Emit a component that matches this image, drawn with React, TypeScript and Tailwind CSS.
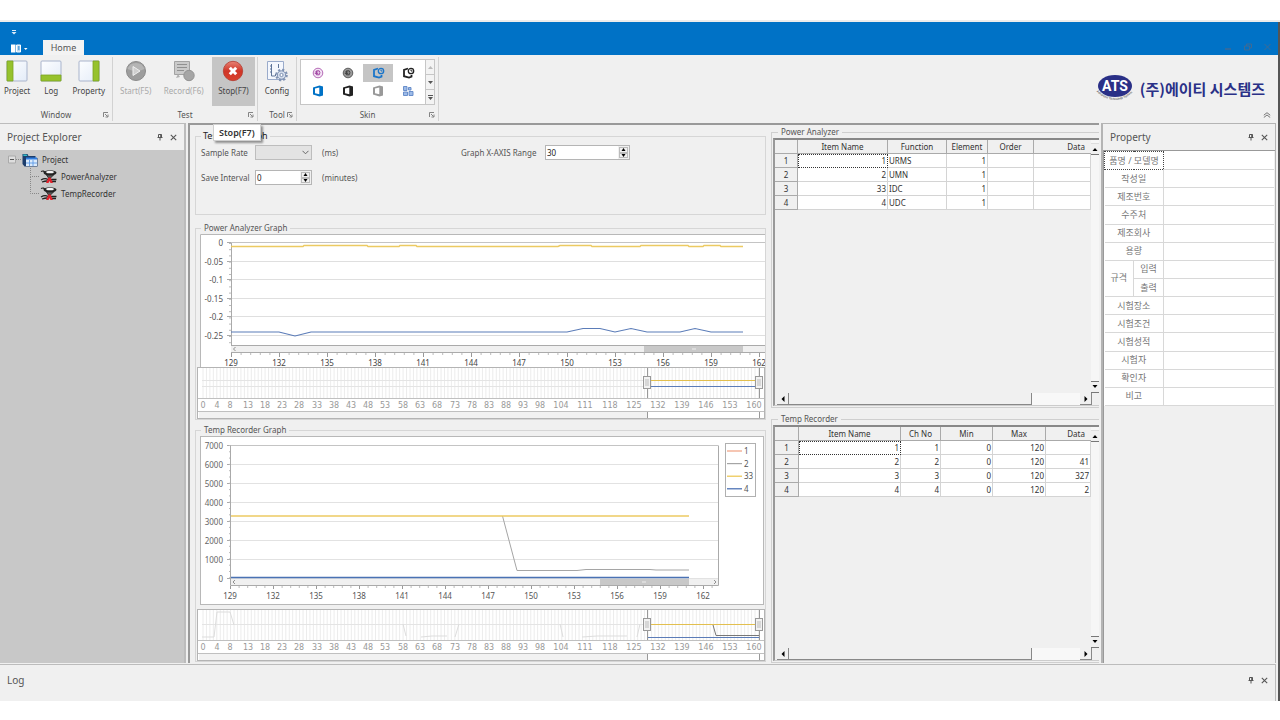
import { useState } from "react";
import type { ReactNode } from "react";

const range = (n: number) => Array.from({ length: n }, (_, i) => i);

const fontStack = "font-['Noto_Sans','Noto_Sans_CJK_KR',sans-serif]";

/* ---------- small icons ---------- */

function PinIcon() {
  return (
    <svg width="6" height="8" viewBox="0 0 6 8" fill="none" stroke="#555">
      <path d="M1.5 4.5v-3h3v3M0.5 4.5h5M3 5v2.5" />
      <path d="M3.8 1.5v3" strokeWidth="1.2" />
    </svg>
  );
}

function CloseIcon() {
  return (
    <svg width="7" height="7" viewBox="0 0 7 7" stroke="#555" strokeWidth="1.1">
      <path d="M0.8 0.8l5.4 5.4M6.2 0.8L0.8 6.2" />
    </svg>
  );
}

function LauncherIcon() {
  return (
    <svg width="6" height="6" viewBox="0 0 6 6" fill="none" stroke="#777" strokeWidth="0.9">
      <path d="M0.5 5V0.5H5M2 2l2.5 2.5M5 2.5V5H2.5" />
    </svg>
  );
}

function PaneIcon({ side }: { side: "left" | "bottom" | "right" }) {
  return (
    <svg width="22" height="22" viewBox="0 0 22 22">
      <defs>
        <linearGradient id="pane" x1="0" y1="0" x2="1" y2="1">
          <stop offset="0" stopColor="#fdfeff" />
          <stop offset="1" stopColor="#e4ecf8" />
        </linearGradient>
      </defs>
      <rect x="1" y="1" width="20" height="20" rx="1" fill="url(#pane)" stroke="#a9b4cc" />
      {side === "left" && <path d="M1 1h6v20H1z" fill="#96c22e" stroke="#7ba324" strokeWidth="0.8" />}
      {side === "bottom" && <path d="M1 15h20v6H1z" fill="#96c22e" stroke="#7ba324" strokeWidth="0.8" />}
      {side === "right" && <path d="M15 1h6v20h-6z" fill="#96c22e" stroke="#7ba324" strokeWidth="0.8" />}
    </svg>
  );
}

function StartIcon() {
  return (
    <svg width="22" height="22" viewBox="0 0 22 22">
      <circle cx="11" cy="11" r="9.5" fill="#9d9d9d" stroke="#8b8b8b" />
      <path d="M2.5 9a9 9 0 0 1 17 0q-8 4-17 0z" fill="#b5b5b5" />
      <path d="M8 6.5l7 4.5-7 4.5z" fill="#cfcfcf" stroke="#efefef" />
    </svg>
  );
}

function RecordIcon() {
  return (
    <svg width="22" height="22" viewBox="0 0 22 22">
      <path d="M1.5 1.5h15v13h-15z" fill="#cacaca" stroke="#a2a2a2" />
      <path d="M4 4.5h10M4 7.5h10M4 10.5h7" stroke="#909090" />
      <path d="M5 14l-2 4 4-1" fill="#b0b0b0" />
      <circle cx="16" cy="15.5" r="5.2" fill="#a6a6a6" stroke="#949494" />
    </svg>
  );
}

function StopIcon() {
  return (
    <svg width="22" height="22" viewBox="0 0 22 22">
      <defs>
        <linearGradient id="stop" x1="0" y1="0" x2="0" y2="1">
          <stop offset="0" stopColor="#e88476" />
          <stop offset="0.5" stopColor="#cf3527" />
          <stop offset="1" stopColor="#d9402c" />
        </linearGradient>
      </defs>
      <circle cx="11" cy="11" r="9.7" fill="url(#stop)" stroke="#b23a2e" strokeWidth="0.8" />
      <path d="M7.8 7.8l6.4 6.4M14.2 7.8l-6.4 6.4" stroke="#fff" strokeWidth="3" />
    </svg>
  );
}

function ConfigIcon() {
  return (
    <svg width="22" height="22" viewBox="0 0 22 22" fill="none">
      <path d="M1.5 1.5h16v18h-16z" fill="#f4f7fd" stroke="#9aabcb" />
      <path d="M5.5 4v12H9M12.5 4v4M4 6h1M4 9h1M4 12h1M9.5 14v2" stroke="#5f7599" />
      <circle cx="15.5" cy="15" r="5.3" stroke="#8193b3" strokeWidth="2" strokeDasharray="2.2 1.96" />
      <circle cx="15.5" cy="15" r="4.2" fill="#d5deed" stroke="#7c8fb0" />
      <circle cx="15.5" cy="15" r="1.6" fill="#fff" stroke="#7c8fb0" />
    </svg>
  );
}

function RoundSkin({ color, fill }: { color: string; fill: string }) {
  return (
    <svg width="12" height="12" viewBox="0 0 12 12" fill="none">
      <circle cx="6" cy="6" r="4.8" fill={fill} stroke={color} strokeWidth="0.8" />
      <path d="M4.5 3.8h2.7q1.5 1.8 0 4H4.5zM2.8 5h3.500M2.800 6.600h3.500" stroke={color} />
    </svg>
  );
}

function OfficeSkin({ color }: { color: string }) {
  return (
    <svg width="12" height="12" viewBox="0 0 12 12">
      <path fillRule="evenodd" d="M1 2.6L7.5 0.5l3.5 1v9l-3.5 1L1 9.4zM3 3.5v4.8l4.3 0.9V2.4z" fill={color} />
    </svg>
  );
}

function OfficeClockSkin({ color }: { color: string }) {
  return (
    <svg width="13" height="12" viewBox="0 0 13 12" fill="none">
      <path d="M6 1.5L2 2.8v6.400L7 10.500l2.500-0.800V8" stroke={color} strokeWidth="1.8" />
      <circle cx="9" cy="4" r="2.7" stroke={color} strokeWidth="1.3" />
      <path d="M9 2.5V4h1.5" stroke={color} />
    </svg>
  );
}

function GridSkin() {
  return (
    <svg width="12" height="12" viewBox="0 0 12 12" fill="#9dbbe8" stroke="#5f86c6" strokeWidth="0.9">
      <path d="M1.5 1.5h3.500v4h-3.500zM1.500 7h4v3.500h-4zM6.500 2.500H9V5H6.500zM7 6.500h4v4H7z" />
    </svg>
  );
}

function InstrumentIcon() {
  return (
    <svg width="18" height="15" viewBox="0 0 18 15">
      <ellipse cx="10" cy="3.8" rx="6.5" ry="2.6" fill="#222" />
      <path d="M5.500 3q4.500-2.500 9 0l-2 1.300H7.500z" fill="#f4f4f4" />
      <path d="M1 2.500q3-1.500 4 1.500" fill="none" stroke="#222" strokeWidth="1.200" />
      <path d="M6.500 6h7l-3 3H8.500z" fill="#555" stroke="#222" strokeWidth="0.8" />
      <path d="M1 11q4-2.500 7-0.500h8.500M2 13q3-1 5-1M12 12.500h4" fill="none" stroke="#222" strokeWidth="1.3" />
      <path d="M8.500 8.500L6 14h2.500l1-2 1 2H13L10.500 8.500z" fill="#e0202a" />
    </svg>
  );
}

function ProjectIcon() {
  return (
    <svg width="16" height="14" viewBox="0 0 16 14">
      <path d="M0.5 1h5l1 2h7v2h2v8.500h-13L0.500 11z" fill="#1c3d6c" />
      <path d="M1 1.500h3.500l1 1.500H1.500z" fill="#35c0c8" />
      <path d="M4 5h11v8H4z" fill="#dcebfb" />
      <path d="M4 4.500h11v2H4z" fill="#2f7de0" />
      <path d="M7.500 7v6M11 7v6M4 10h11" stroke="#5b9ae6" strokeWidth="0.9" />
    </svg>
  );
}

function AtsLogo() {
  return (
    <svg width="42" height="32" viewBox="0 0 42 32">
      <ellipse cx="21" cy="13" rx="17" ry="11" fill="#2a3087" />
      <text x="21" y="18" textAnchor="middle" className="font-['Roboto',sans-serif] text-[14px] font-bold" fill="#fff">
        ATS
      </text>
      <path id="atsCurve" d="M3 19Q21 35 39 19" fill="none" />
      <text className="font-['Liberation_Sans',sans-serif] text-[3px]" textAnchor="middle" fill="#333">
        <textPath href="#atsCurve" startOffset="50%">Advanced Technology Systems</textPath>
      </text>
    </svg>
  );
}

/* ---------- ribbon ---------- */

interface RibbonButtonProps {
  label: string;
  icon: ReactNode;
  disabled?: boolean;
  active?: boolean;
  tooltip?: string;
}

function RibbonButton({ label, icon, disabled, active, tooltip }: RibbonButtonProps) {
  return (
    <div className="relative">
      <button
        disabled={disabled}
        className={`flex h-[49px] flex-col items-center gap-[3px] px-1 pt-[3px] ${
          active ? "min-w-[43px] bg-[#c5c5c5]" : ""
        } ${disabled ? "text-[#a9a9a9]" : "text-[#444]"}`}
      >
        {icon}
        <span className="text-[8px] leading-[12px]">{label}</span>
      </button>
      {tooltip && (
        <div
          role="tooltip"
          className="absolute left-px top-[67px] z-10 whitespace-nowrap border border-[#d0d0d0] bg-white px-[5px] text-[9px] font-semibold leading-[15px] text-[#333] shadow-[2px_2px_2px_rgba(0,0,0,0.4)]"
        >
          {tooltip}
        </div>
      )}
    </div>
  );
}

function RibbonGroup({ title, className, children }: { title: string; className: string; children: ReactNode }) {
  return (
    <section className={`flex flex-col justify-between border-r border-[#d2d2d2] ${className}`}>
      <div className="flex justify-center">{children}</div>
      <div className="relative text-center text-[8px] leading-[13px] text-[#555]">
        {title}
        <button aria-label={`${title} options`} className="absolute bottom-[3px] right-[3px]">
          <LauncherIcon />
        </button>
      </div>
    </section>
  );
}

const skins = [
  { name: "DevExpress", icon: <RoundSkin color="#a349a4" fill="#f3e3f5" /> },
  { name: "DevExpress Dark", icon: <RoundSkin color="#444" fill="#999" /> },
  { name: "Office 2016", icon: <OfficeClockSkin color="#1b75c9" /> },
  { name: "Office 2016 Dark", icon: <OfficeClockSkin color="#222" /> },
  { name: "Office 2013", icon: <OfficeSkin color="#0072c6" /> },
  { name: "Office 2013 Dark", icon: <OfficeSkin color="#222" /> },
  { name: "Office 2013 Gray", icon: <OfficeSkin color="#999" /> },
  { name: "Visual Studio", icon: <GridSkin /> },
];

function SkinGallery() {
  const [selected, setSelected] = useState(2);
  return (
    <div className="mt-0.5 flex h-[46px] border border-[#c6c6c6] bg-white">
      <div className="grid grid-cols-4 content-center px-0.5">
        {skins.map((skin, i) => (
          <button
            key={skin.name}
            aria-label={skin.name}
            onClick={() => setSelected(i)}
            className={`flex h-[18px] w-[30px] items-center justify-center ${i === selected ? "bg-[#c5c5c5]" : ""}`}
          >
            {skin.icon}
          </button>
        ))}
      </div>
      <div className="flex w-[9px] flex-col divide-y divide-[#c6c6c6] border-l border-[#c6c6c6] bg-[#f3f3f3]">
        <button aria-label="Scroll up" className="flex flex-1 items-center justify-center">
          <svg width="5" height="3" viewBox="0 0 5 3"><path d="M0 3h5L2.5 0z" fill="#bbb" /></svg>
        </button>
        <button aria-label="Scroll down" className="flex flex-1 items-center justify-center">
          <svg width="5" height="3" viewBox="0 0 5 3"><path d="M0 0h5L2.5 3z" fill="#555" /></svg>
        </button>
        <button aria-label="More skins" className="flex flex-1 items-center justify-center">
          <svg width="5" height="5" viewBox="0 0 5 5"><path d="M0 0h5v1H0zM0 2h5L2.5 5z" fill="#555" /></svg>
        </button>
      </div>
    </div>
  );
}

function TitleBar() {
  return (
    <header className="flex h-[33px] items-end justify-between bg-[#0072c6]">
      <div className="flex items-end">
        <div className="flex w-[43px] flex-col gap-[9px] pb-0.5 pl-[11px]">
          <button aria-label="Customize toolbar" className="w-[6px]">
            <svg width="6" height="5" viewBox="0 0 6 5"><path d="M1 0h4v1H1zM0.5 2h5L3 4.5z" fill="#dbeaf7" /></svg>
          </button>
          <button aria-label="Menu" className="w-4">
            <svg width="17" height="9" viewBox="0 0 17 9">
              <path d="M0 0.5h4.5v8H0z" fill="#fff" />
              <path d="M5.5 1h4v7h-4z" fill="#bdd8ee" stroke="#fff" />
              <path d="M7 3h1.5M7 5h1.5" stroke="#0072c6" />
              <path d="M13 4h3.5l-1.75 2z" fill="#fff" />
            </svg>
          </button>
        </div>
        <button className="h-[15px] w-[41px] bg-[#f3f3f3] text-[9px] leading-[15px] text-[#555]">Home</button>
      </div>
      <div className="flex gap-[12px] pb-1 pr-[7px]">
        <button aria-label="Minimize">
          <svg width="8" height="8" viewBox="0 0 8 8"><path d="M1 6h6" stroke="#3f6a94" strokeWidth="1.5" /></svg>
        </button>
        <button aria-label="Restore">
          <svg width="8" height="8" viewBox="0 0 8 8" fill="none" stroke="#3f6a94"><path d="M0.5 3h5v4h-5zM2.5 3V1h5v4H5.5" /></svg>
        </button>
        <button aria-label="Close">
          <svg width="7" height="8" viewBox="0 0 7 8" stroke="#3f6a94"><path d="M0.5 1l6 6M6.5 1l-6 6" /></svg>
        </button>
      </div>
    </header>
  );
}

function Ribbon() {
  return (
    <div className="flex h-[68px] justify-between bg-[#f0f0f0] pb-px pt-0.5">
      <div className="flex pb-px">
        <RibbonGroup title="Window" className="w-[113px]">
          <div className="flex w-full justify-between pr-[3px]">
            <RibbonButton label="Project" icon={<PaneIcon side="left" />} />
            <RibbonButton label="Log" icon={<PaneIcon side="bottom" />} />
            <RibbonButton label="Property" icon={<PaneIcon side="right" />} />
          </div>
        </RibbonGroup>
        <RibbonGroup title="Test" className="w-[145px]">
          <div className="flex w-full justify-between pl-[3px] pr-0.5">
            <RibbonButton label="Start(F5)" icon={<StartIcon />} disabled />
            <RibbonButton label="Record(F6)" icon={<RecordIcon />} disabled />
            <RibbonButton label="Stop(F7)" icon={<StopIcon />} active tooltip="Stop(F7)" />
          </div>
        </RibbonGroup>
        <RibbonGroup title="Tool" className="w-[39px]">
          <RibbonButton label="Config" icon={<ConfigIcon />} />
        </RibbonGroup>
        <RibbonGroup title="Skin" className="w-[142px]">
          <SkinGallery />
        </RibbonGroup>
      </div>
      <div className="flex flex-col items-end justify-between pb-1 pr-[7px] pt-4">
        <div className="flex items-center gap-1 pr-[6px]">
          <AtsLogo />
          <span className="font-['Noto_Sans_CJK_KR',sans-serif] text-[15px] font-bold leading-[22px] text-[#2a3087]">
            (주)에이티 시스템즈
          </span>
        </div>
        <button aria-label="Collapse ribbon">
          <svg width="8" height="6" viewBox="0 0 8 6" fill="none" stroke="#777"><path d="M0.8 3.2L4 0.7l3.2 2.5M0.8 5.5L4 3l3.2 2.5" /></svg>
        </button>
      </div>
    </div>
  );
}

/* ---------- docked panels ---------- */

function PanelHeader({ title }: { title: string }) {
  return (
    <div className="flex h-[26px] items-center justify-between px-[7px]">
      <h2 className="text-[10px] leading-[14px] text-[#555]">{title}</h2>
      <div className="flex items-center gap-[7px]">
        <button aria-label={`Pin ${title}`}><PinIcon /></button>
        <button aria-label={`Close ${title}`}><CloseIcon /></button>
      </div>
    </div>
  );
}

function ProjectExplorer() {
  return (
    <aside className="flex w-[186px] shrink-0 flex-col border-r-2 border-t border-[#bcbcbc] bg-[#f0f0f0]">
      <PanelHeader title="Project Explorer" />
      <ul className="flex-1 bg-[#c8c8c8] pt-px text-[8px] leading-[17px] text-[#333]">
        <li>
          <div className="flex items-center pl-2">
            <svg width="14" height="9" viewBox="0 0 14 9" fill="none" stroke="#888">
              <path d="M0.5 1h7v7h-7z" fill="#dedede" stroke="#aaa" />
              <path d="M2 4.5h4" stroke="#555" />
              <path d="M8 4.5h6" strokeDasharray="1 1" />
            </svg>
            <ProjectIcon />
            <span className="pl-1">Project</span>
          </div>
          <ul className="ml-[30px]">
            {["PowerAnalyzer", "TempRecorder"].map((name) => (
              <li key={name} className="flex h-[17px] items-center">
                <svg width="10" height="17" viewBox="0 0 10 17" fill="none" stroke="#888" strokeDasharray="1 1">
                  <path d="M0.5 0v8.5H10" />
                  {name === "PowerAnalyzer" && <path d="M0.5 9v8" />}
                </svg>
                <InstrumentIcon />
                <span className="pl-[3px]">{name}</span>
              </li>
            ))}
          </ul>
        </li>
      </ul>
    </aside>
  );
}

const specRows = [
  "품명 / 모델명",
  "작성일",
  "제조번호",
  "수주처",
  "제조회사",
  "용량",
  "입력",
  "출력",
  "시험장소",
  "시험조건",
  "시험성적",
  "시험자",
  "확인자",
  "비고",
];

function PropertyPanel() {
  return (
    <aside className="flex w-[175px] shrink-0 flex-col border-l-2 border-r border-t border-[#b4b4b4] bg-[#f0f0f0]">
      <PanelHeader title="Property" />
      <div className="flex-1 border-l border-t border-[#999] pr-px">
        <table className="h-[255px] w-full table-fixed border-collapse bg-white text-center text-[9px] leading-[12px] text-[#777]">
          <colgroup>
            <col className="w-[29px]" />
            <col className="w-[30px]" />
            <col />
          </colgroup>
          <tbody>
            {specRows.map((name, i) => {
              const nested = name === "입력" || name === "출력";
              return (
                <tr key={name}>
                  {name === "입력" && (
                    <th rowSpan={2} className="border-b border-r border-[#d8d8d8] font-normal">
                      규격
                    </th>
                  )}
                  <th
                    colSpan={nested ? 1 : 2}
                    className={`whitespace-nowrap font-normal ${
                      i === 0 ? "border border-dotted border-[#444]" : "border-b border-r border-[#d8d8d8]"
                    }`}
                  >
                    {name}
                  </th>
                  <td className="border-b border-[#d8d8d8]" />
                </tr>
              );
            })}
          </tbody>
        </table>
      </div>
    </aside>
  );
}

/* ---------- charts ---------- */

const samples = [129, 132, 135, 138, 141, 144, 147, 150, 153, 156, 159, 162];
const svgText = "font-['Noto_Sans',sans-serif] text-[8px]";

function PowerChart() {
  const yLabels = ["0", "-0.05", "-0.1", "-0.15", "-0.2", "-0.25"];
  const y = (i: number) => Math.round(8 + i * 18.6) + 0.5;
  return (
    <svg viewBox="0 0 565 133" className="block h-auto w-full bg-white">
      <path d="M0.5 133V0.5H565" fill="none" stroke="#b8b8b8" />
      {yLabels.map((label, i) => (
        <g key={label}>
          <path d={`M31 ${y(i)}H565`} stroke={i === 0 ? "#c4c4c4" : "#dfdfdf"} />
          <path d={`M27 ${y(i)}h4`} stroke="#aaa" />
          <text x="23" y={y(i) + 3} textAnchor="end" fill="#555" className={svgText}>{label}</text>
        </g>
      ))}
      {range(17).map((i) => (
        <path key={i} d={`M29 ${9.5 + i * 6.2}h2`} stroke="#bbb" />
      ))}
      <path d="M31.5 9v109" stroke="#aaa" />
      <rect x="31" y="111" width="534" height="7" fill="#f0f0f0" />
      <path d="M31 111.5H565M31 118.5H565" stroke="#aaa" />
      <rect x="444" y="112" width="99" height="6" fill="#c8c8c8" />
      <path d="M492 115h4" stroke="#eee" />
      <path d="M35.5 113l-2 2 2 2" fill="none" stroke="#777" strokeWidth="0.8" />
      {range(56).map((i) => (
        <path key={i} d={`M${31.5 + i * 9.6} 119v2`} stroke="#bbb" />
      ))}
      {samples.map((m, i) => (
        <g key={m}>
          <path d={`M${31.5 + i * 48} 119v4`} stroke="#999" />
          <text x={31 + i * 48} y="132" textAnchor="middle" fill="#444" className={svgText}>{m}</text>
        </g>
      ))}
      <path
        d="M31 12.5H103l1-1H167l1 1H199l1-1H216l1 1H358l2-1H391l1 1H440l1-1H488l1 1H503l1-1H520l1 1H543"
        fill="none"
        stroke="#ecca62"
        strokeWidth="1.5"
      />
      <path
        d="M31 98H79L95 102L111 98H367L383 94.5H400L415 98L431 94.5L447 98H480L495 94.5L511 98H543"
        fill="none"
        stroke="#5b7cb8"
        strokeWidth="1.2"
      />
    </svg>
  );
}

const legend = [
  { name: "1", color: "#f0a080" },
  { name: "2", color: "#a5a5a5" },
  { name: "33", color: "#ecc54c" },
  { name: "4", color: "#4068b0" },
];

function TempChart() {
  const y = (i: number) => Math.round(10 + i * 18.93) - 0.5;
  return (
    <svg viewBox="0 0 564 169" className="block h-auto w-full bg-white">
      <rect x="0.5" y="0.5" width="563" height="168" fill="none" stroke="#b8b8b8" />
      {[7000, 6000, 5000, 4000, 3000, 2000, 1000, 0].map((label, i) => (
        <g key={label}>
          <path d={`M30 ${y(i)}H518`} stroke={i === 0 ? "#c4c4c4" : "#e2e2e2"} />
          <path d={`M27 ${y(i)}h3`} stroke="#aaa" />
          <text x="23" y={y(i) + 3} textAnchor="end" fill="#666" className={svgText}>{label}</text>
        </g>
      ))}
      {range(22).map((i) => (
        <path key={i} d={`M29 ${9.5 + i * 6.3}h2`} stroke="#bbb" />
      ))}
      <rect x="31" y="143" width="487" height="6" fill="#f0f0f0" />
      <rect x="400" y="143" width="89" height="6" fill="#c8c8c8" />
      <path d="M442 146h4" stroke="#eee" />
      <path d="M30.5 9.5V149.5H518.5V9.5" fill="none" stroke="#aaa" />
      <path d="M35 144l-2 2 2 2M514 144l2 2-2 2" fill="none" stroke="#777" strokeWidth="0.8" />
      {range(57).map((i) => (
        <path key={i} d={`M${30.5 + i * 8.6} 150v2`} stroke="#bbb" />
      ))}
      {samples.map((m, i) => (
        <g key={m}>
          <path d={`M${Math.round(30 + i * 43) + 0.5} 150v3`} stroke="#999" />
          <text x={30 + i * 43} y="163" textAnchor="middle" fill="#555" className={svgText}>{m}</text>
        </g>
      ))}
      <path d="M302.5 80L317 134.5H377L386 133.5H450L456 134H489" fill="none" stroke="#a5a5a5" />
      <path d="M31 80H489" stroke="#ecca62" strokeWidth="1.5" />
      <path d="M31 141.5H489" stroke="#4a72b4" strokeWidth="1.5" />
      <rect x="525.5" y="7.5" width="30" height="53" fill="#fff" stroke="#b0b0b0" />
      {legend.map((item, i) => (
        <g key={item.name}>
          <path d={`M527 ${15 + i * 12.6}h15`} stroke={item.color} strokeWidth="1.2" />
          <text x="544" y={18 + i * 12.6} fill="#555" className={svgText}>{item.name}</text>
        </g>
      ))}
    </svg>
  );
}

const navTicks = [
  [0, 6], [4, 20], [8, 33], [13, 51], [18, 68], [23, 85], [28, 102], [33, 120], [38, 137], [43, 154],
  [48, 171], [53, 188], [58, 206], [63, 223], [68, 240], [73, 258], [78, 275], [83, 292], [88, 309],
  [93, 326], [98, 343], [104, 364], [111, 388], [118, 413], [125, 437], [132, 461], [139, 485],
  [146, 509], [153, 533], [160, 557],
];

function RangeNavigator({ gridLines, children }: { gridLines: number[]; children: ReactNode }) {
  return (
    <svg viewBox="0 0 568 52" className="block h-auto w-full bg-white">
      {range(162).map((i) => (
        <path key={i} d={`M${6 + i * 3.45} 1V31`} stroke="#ececec" />
      ))}
      {gridLines.map((gy) => (
        <path key={gy} d={`M5 ${gy}H562`} stroke="#e4e4e4" />
      ))}
      {children}
      <path d="M0 0.5H568M0 31.5H568M0 44.5H568" stroke="#c0c0c0" />
      <rect x="2" y="45" width="448" height="6" fill="#f2f2f2" />
      {navTicks.map(([value, x]) => (
        <text key={value} x={x} y="41" textAnchor="middle" fill="#999" className="font-['DejaVu_Sans',sans-serif] text-[8px]">
          {value}
        </text>
      ))}
      <path d="M450.5 0V31M450.5 45V51M562.5 0V31M562.5 45V51" stroke="#999" />
      <rect x="0.5" y="0.5" width="567" height="51" fill="none" stroke="#b4b4b4" />
      {[446, 558].map((x) => (
        <g key={x}>
          <rect x={x + 0.5} y="9.5" width="7" height="12" fill="#f2f2f2" stroke="#999" />
          <path d={`M${x + 3} 12v7M${x + 5} 12v7`} stroke="#bbb" />
        </g>
      ))}
    </svg>
  );
}

/* ---------- test settings ---------- */

const groupBox = "min-w-0 border border-[#d6d6d6]";
const groupTitle = "ml-[5px] px-[3px] text-[8px] leading-[12px] text-[#555]";

function Spinner({ id, initial, className }: { id: string; initial: string; className: string }) {
  const [value, setValue] = useState(initial);
  const step = (d: number) => setValue(String(Math.max(0, Number(value) + d)));
  return (
    <div className={`flex h-[15px] border border-[#b5b5b5] bg-white ${className}`}>
      <input
        id={id}
        value={value}
        onChange={(e) => setValue(e.target.value)}
        className="min-w-0 flex-1 px-px text-[8px] leading-[13px] text-[#222] outline-none"
      />
      <div className="flex w-[11px] flex-col bg-[#f0f0f0] p-px">
        <button aria-label="Increase" onClick={() => step(1)} className="flex flex-1 items-center justify-center border border-[#bbb]">
          <svg width="5" height="3" viewBox="0 0 5 3"><path d="M0.5 3h4L2.5 0z" /></svg>
        </button>
        <button aria-label="Decrease" onClick={() => step(-1)} className="flex flex-1 items-center justify-center border border-[#bbb]">
          <svg width="5" height="3" viewBox="0 0 5 3"><path d="M0.5 0h4L2.5 3z" /></svg>
        </button>
      </div>
    </div>
  );
}

function TestSettings() {
  return (
    <fieldset className={`min-h-[85px] text-[8px] leading-[12px] text-[#555] ${groupBox}`}>
      <legend className="ml-[5px] px-0.5 text-[9px] leading-[12px] text-[#222]">Test Run Graph</legend>
      <div className="flex items-center pl-[5px] pt-[3px]">
        <label htmlFor="rate" className="w-[54px]">Sample Rate</label>
        <div className="relative">
          <select id="rate" className="block h-[15px] w-[57px] appearance-none border border-[#bdbdbd] bg-[#e3e3e3]" />
          <svg width="7" height="5" viewBox="0 0 7 5" fill="none" stroke="#666" className="pointer-events-none absolute right-[3px] top-[5px]">
            <path d="M0.5 0.8l3 3 3-3" />
          </svg>
        </div>
        <span className="w-[149px] pl-[10px]">(ms)</span>
        <label htmlFor="xrange" className="w-[84px]">Graph X-AXIS Range</label>
        <Spinner id="xrange" initial="30" className="w-[85px]" />
      </div>
      <div className="flex items-center pl-[5px] pt-[10px]">
        <label htmlFor="interval" className="w-[54px] whitespace-nowrap">Save Interval</label>
        <Spinner id="interval" initial="0" className="w-[57px]" />
        <span className="pl-[10px]">(minutes)</span>
      </div>
    </fieldset>
  );
}

/* ---------- data grids ---------- */

interface DataGridProps {
  title: string;
  columns: string[];
  widths: string[];
  rows: string[][];
  leftAligned?: number;
  frameClass: string;
}

const scrollBtn = "flex items-center justify-center bg-[#f0f0f0]";

function DataGrid({ title, columns, widths, rows, leftAligned, frameClass }: DataGridProps) {
  return (
    <fieldset className="min-w-0 border border-r-0 border-[#cfcfcf] pb-px pl-px">
      <legend className={groupTitle}>{title}</legend>
      <div className={`flex flex-col border-b border-l-2 border-t-2 border-b-[#ccc] border-l-[#999] border-t-[#888] ${frameClass}`}>
        <div className="flex flex-1">
          <div className="min-w-0 flex-1">
            <table className="w-full table-fixed border-separate border-spacing-0 text-[8px] leading-[13px] text-[#333]">
              <colgroup>
                {widths.map((w, i) => (
                  <col key={i} className={w} />
                ))}
              </colgroup>
              <thead>
                <tr>
                  <th className="border-b border-r border-[#aaa]" />
                  {columns.map((c, i) => (
                    <th
                      key={c}
                      className={`whitespace-nowrap border-b border-[#aaa] font-normal ${
                        i === columns.length - 1 ? "pr-1.5 text-right" : "border-r"
                      }`}
                    >
                      {c}
                    </th>
                  ))}
                </tr>
              </thead>
              <tbody>
                {rows.map((row, r) => (
                  <tr key={r}>
                    <th className="border-b border-r border-[#aaa] font-normal">{r + 1}</th>
                    {row.map((cell, c) => (
                      <td
                        key={c}
                        className={`h-[14px] overflow-hidden bg-white px-px leading-[12px] ${c === leftAligned ? "text-left" : "text-right"} ${
                          r === 0 && c === 0 ? "border border-dotted border-[#333]" : "border-b border-r border-[#d4d4d4]"
                        }`}
                      >
                        {cell}
                      </td>
                    ))}
                  </tr>
                ))}
              </tbody>
            </table>
          </div>
          <div className="flex w-2 flex-col justify-between bg-[#f6f6f6] pt-[3px]">
            <button aria-label="Scroll up" className={`h-3 border-b border-t border-b-[#777] border-t-[#ddd] ${scrollBtn}`}>
              <svg width="6" height="4" viewBox="0 0 6 4"><path d="M0.5 4h5L3 1z" /></svg>
            </button>
            <button aria-label="Scroll down" className={`h-3 border-b border-t border-[#777] ${scrollBtn}`}>
              <svg width="6" height="4" viewBox="0 0 6 4"><path d="M0.5 0h5L3 3z" /></svg>
            </button>
          </div>
        </div>
        <div className="flex h-3 pl-0.5 pr-[7px]">
          <button aria-label="Scroll left" className={`w-3 border-b border-r border-[#888] ${scrollBtn}`}>
            <svg width="4" height="6" viewBox="0 0 4 6"><path d="M3.5 0v6L0.5 3z" /></svg>
          </button>
          <div className="flex-1 bg-[#f8f8f8]">
            <div className="h-3 w-5/6 border-b border-r border-[#888] bg-[#f0f0f0]" />
          </div>
          <button aria-label="Scroll right" className={`w-3 border-b border-r border-[#888] ${scrollBtn}`}>
            <svg width="4" height="6" viewBox="0 0 4 6"><path d="M0.5 0v6L3.5 3z" /></svg>
          </button>
        </div>
      </div>
    </fieldset>
  );
}

export default function App() {
  return (
    <div className={`min-h-screen bg-white ${fontStack}`}>
      <div className="h-[22px] border-b-2 border-[#ececec]" />
      <div className="flex flex-col border-r-2 border-[#555] bg-[#f0f0f0]">
        <TitleBar />
        <Ribbon />

        <div className="flex">
          <ProjectExplorer />

          <main className="ml-0.5 flex min-w-0 flex-1 gap-[5px] border-l-2 border-t-2 border-[#999]">
            <div className="min-w-0 flex-1 pl-[5px] pt-[5px]">
              <TestSettings />

              <fieldset className={`mt-[7px] ${groupBox}`}>
                <legend className={groupTitle}>Power Analyzer Graph</legend>
                <div className="pl-1">
                  <PowerChart />
                </div>
                <div className="pl-px">
                  <RangeNavigator gridLines={[13.5, 19.5]}>
                    <path d="M451 13.5H562" stroke="#e2bf4e" />
                    <path d="M451 19.5H562" stroke="#5b7cb8" />
                  </RangeNavigator>
                </div>
              </fieldset>

              <fieldset className={`mt-1 ${groupBox}`}>
                <legend className={groupTitle}>Temp Recorder Graph</legend>
                <div className="pl-1 pr-px">
                  <TempChart />
                </div>
                <div className="pl-px pt-1">
                  <RangeNavigator gridLines={[15.5]}>
                    <path
                      d="M5 28H17L20 3H33L37 16M206 15L209 27M224 28L235 27H250M258 28L262 15M363 15L366 28M385 28L400 27H430M440 28L443 15"
                      fill="none"
                      stroke="#ddd"
                    />
                    <path d="M451 15.5H562" stroke="#e2bf4e" />
                    <path d="M516 16L519 26.5H562" fill="none" stroke="#777" />
                    <path d="M451 28.5H562" stroke="#5b7cb8" />
                  </RangeNavigator>
                </div>
              </fieldset>
            </div>

            <div className="flex w-[328px] shrink-0 flex-col gap-[5px] pt-px">
              <DataGrid
                title="Power Analyzer"
                columns={["Item Name", "Function", "Element", "Order", "Data"]}
                widths={["w-[23px]", "w-[90px]", "w-[59px]", "w-[41px]", "w-[46px]", ""]}
                rows={[
                  ["1", "URMS", "1", "", ""],
                  ["2", "UMN", "1", "", ""],
                  ["33", "IDC", "1", "", ""],
                  ["4", "UDC", "1", "", ""],
                ]}
                leftAligned={1}
                frameClass="h-[268px]"
              />
              <DataGrid
                title="Temp Recorder"
                columns={["Item Name", "Ch No", "Min", "Max", "Data"]}
                widths={["w-[24px]", "w-[102px]", "w-[40px]", "w-[52px]", "w-[53px]", ""]}
                rows={[
                  ["1", "1", "0", "120", ""],
                  ["2", "2", "0", "120", "41"],
                  ["3", "3", "0", "120", "327"],
                  ["4", "4", "0", "120", "2"],
                ]}
                frameClass="h-[236px]"
              />
            </div>
          </main>

          <div className="ml-0.5 mr-0.5 flex">
            <PropertyPanel />
          </div>
        </div>

        <footer className="mr-0.5 mt-px h-[37px] border-r border-t border-[#bcbcbc] pt-0.5">
          <PanelHeader title="Log" />
        </footer>
      </div>
    </div>
  );
}
